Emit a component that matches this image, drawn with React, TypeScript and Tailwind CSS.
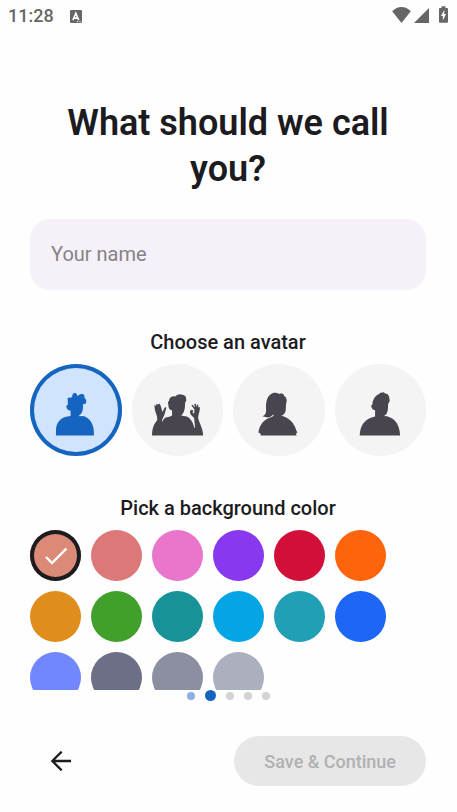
import { useState } from "react";

const avatars = [
  {
    name: "Curly hair",
    viewBox: "30 27 275 275",
    path: "M108 242 V228 C108 204 122 188 143 185 L152 183 L152 167 C147 168 141 164 140 158 C138 154 141 151 144 149 L143 129 L157 127 C155 119 162 111 169 116 L174 124 C178 115 190 115 193 121 L194 129 C199 132 200 139 198 146 L189 149 C190 163 188 177 178 181 L178 184 L190 183 C208 188 222 206 222 232 V242 Z",
  },
  {
    name: "Hands up",
    viewBox: "21 28 274 274",
    path: "M81 242 C81 220 87 207 96 197 C99 186 90 172 89 162 L88 150 L93 154 L94 147 L99 149 L103 146 L107 153 L110 164 L112 172 L120 157 L124 159 L119 177 C116 187 112 190 111 198 L113 201 C115 190 122 187 133 186 L141 182 L141 167 C133 165 129 158 130 149 C127 145 129 141 132 139 C132 129 140 123 151 125 C156 118 168 117 173 121 C181 121 185 129 183 139 L180 144 C180 162 178 174 168 182 L185 185 C196 189 203 202 208 219 L210 219 L207 190 L200 183 C193 175 193 167 200 165 L205 168 L202 173 L207 177 L208 164 L199 152 L202 150 L210 158 L207 148 L211 147 L216 157 L216 149 L219 149 L220 158 L224 157 C226 168 219 178 219 189 C221 202 234 222 234 242 Z",
  },
  {
    name: "Long hair",
    viewBox: "26 28 274 274",
    path: "M102 233 C106 210 118 193 142 187 L148 183 L146 179 C141 186 132 190 123 187 L112 184 C121 184 126 176 125 164 C124 144 127 126 140 118 C149 111 160 115 165 118 C174 114 179 119 179 124 C188 128 188 140 185 147 L184 166 C183 174 179 181 170 183 C194 188 210 205 216 228 L219 233 L215 235 L216 242 H109 L108 236 Z",
  },
  {
    name: "Short hair",
    viewBox: "24 28 274 274",
    path: "M98 242 C99 210 115 191 144 185 L144 166 C139 167 135 163 133 157 C132 153 133 151 136 149 C137 133 145 123 157 117 L161 113 L166 114 L169 112 L174 116 L181 118 C187 122 187 133 188 139 L183 148 C183 164 182 181 169 184 C199 184 218 207 219 242 Z",
  },
];

const colors = [
  { name: "Rosewater", className: "bg-[#dc8a78]" },
  { name: "Flamingo", className: "bg-[#dd7878]" },
  { name: "Pink", className: "bg-[#ea76cb]" },
  { name: "Mauve", className: "bg-[#8839ef]" },
  { name: "Red", className: "bg-[#d20f39]" },
  { name: "Peach", className: "bg-[#fe640b]" },
  { name: "Yellow", className: "bg-[#df8e1d]" },
  { name: "Green", className: "bg-[#40a02b]" },
  { name: "Teal", className: "bg-[#179299]" },
  { name: "Sky", className: "bg-[#04a5e5]" },
  { name: "Sapphire", className: "bg-[#209fb5]" },
  { name: "Blue", className: "bg-[#1e66f5]" },
  { name: "Lavender", className: "bg-[#7287fd]" },
  { name: "Slate", className: "bg-[#6c6f85]" },
  { name: "Gray", className: "bg-[#8c8fa1]" },
  { name: "Silver", className: "bg-[#acb0be]" },
];

function StatusBar() {
  return (
    <div className="flex h-8 shrink-0 items-center justify-between pr-[9px] pl-2 text-[#666666]">
      <div className="flex items-center gap-4">
        <span className="text-[18px] leading-8 font-medium">11:28</span>
        <svg viewBox="0 0 37 40" className="h-[13px] w-3" aria-hidden="true">
          <rect width="37" height="40" rx="4" fill="currentColor" />
          <path d="M9 31 L18 10 L27 31 M12 25 H24" fill="none" stroke="#fefefe" strokeWidth="5" />
          <path d="M21 36 H25 M29 36 H33" stroke="#fefefe" strokeWidth="3" />
        </svg>
      </div>
      <div className="flex items-end pb-[3px]">
        <svg viewBox="0 0 56 48" className="h-4 w-[19px]" aria-hidden="true">
          <path d="M0 13 C16 -4 40 -4 56 13 L28 48 Z" fill="currentColor" />
        </svg>
        <svg viewBox="0 0 45 45" className="ml-[3px] size-[15px]" aria-hidden="true">
          <path d="M45 0 V45 H0 Z" fill="currentColor" />
        </svg>
        <svg viewBox="0 0 28 51" className="ml-[10px] h-[17px] w-[9px]" aria-hidden="true">
          <path d="M8 0 H20 V5 H25 Q28 5 28 8 V48 Q28 51 25 51 H3 Q0 51 0 48 V8 Q0 5 3 5 H8 Z" fill="currentColor" />
          <path d="M17 11 L6 30 H12 V44 L22 24 H16 Z" fill="#fefefe" />
        </svg>
      </div>
    </div>
  );
}

export default function App() {
  const [name, setName] = useState("");
  const [avatar, setAvatar] = useState(0);
  const [color, setColor] = useState(0);

  return (
    <div className="flex h-screen flex-col bg-[#fefefe] font-['Roboto',sans-serif] text-[#1c1b1f]">
      <StatusBar />

      <main className="min-h-0 flex-1 overflow-y-auto pt-[68px] pr-[31px] pl-[30px] [scrollbar-width:none]">
        <h1 className="text-center text-[36px] leading-[46px] font-semibold">
          <label htmlFor="name">What should we call you?</label>
        </h1>
        <input
          id="name"
          type="text"
          placeholder="Your name"
          value={name}
          onChange={(e) => setName(e.target.value)}
          className="mt-[27px] block h-[71px] w-full rounded-[20px] bg-[#f6f1f9] px-[21px] pb-0.5 text-[20px] outline-none placeholder:text-[#858387]"
        />

        {/* Avatars */}
        <section className="mt-[38px]">
          <h2 className="text-center text-[20px] leading-7 font-medium">Choose an avatar</h2>
          <div className="mt-2 grid grid-cols-4 gap-[10px]">
            {avatars.map((item, i) => (
              <button
                key={item.name}
                type="button"
                aria-label={item.name}
                aria-pressed={avatar === i}
                onClick={() => setAvatar(i)}
                className={
                  avatar === i
                    ? "aspect-square rounded-full bg-[#d0e4ff] text-[#1565c0] inset-ring-4 inset-ring-[#1565c0]"
                    : "aspect-square rounded-full bg-[#f4f4f4] text-[#49454f]"
                }
              >
                <svg viewBox={item.viewBox} className="size-full" aria-hidden="true">
                  <path d={item.path} fill="currentColor" />
                </svg>
              </button>
            ))}
          </div>
        </section>

        {/* Background colors */}
        <section className="mt-[38px]">
          <h2 className="text-center text-[20px] leading-7 font-medium">Pick a background color</h2>
          <div className="mt-2 flex flex-wrap gap-[10px]">
            {colors.map((item, i) => (
              <button
                key={item.name}
                type="button"
                aria-label={item.name}
                aria-pressed={color === i}
                onClick={() => setColor(i)}
                className={`size-[51px] rounded-full ${item.className} ${
                  color === i ? "inset-ring-4 inset-ring-[#1c1b1f]" : ""
                }`}
              >
                {color === i && (
                  <svg viewBox="0 0 153 153" className="size-full" aria-hidden="true">
                    <path d="M48 81 L66 99 L109 56" fill="none" stroke="white" strokeWidth="7" />
                  </svg>
                )}
              </button>
            ))}
          </div>
        </section>
      </main>

      {/* Step dots */}
      <div className="flex shrink-0 items-center justify-center gap-[10px]">
        <span className="size-2 rounded-full bg-[#8aafe0]" />
        <span className="size-[11px] rounded-full bg-[#1565c0]" />
        <span className="size-2 rounded-full bg-[#d3d3d3]" />
        <span className="size-2 rounded-full bg-[#d3d3d3]" />
        <span className="size-2 rounded-full bg-[#d3d3d3]" />
      </div>

      <footer className="flex shrink-0 items-center justify-between pt-[35px] pr-[31px] pb-[26px] pl-[30px]">
        <button type="button" aria-label="Back" className="-my-2 flex size-[61px] items-center justify-center">
          <svg viewBox="0 0 60 60" className="size-5" aria-hidden="true">
            <path d="M60 30 H4 M32 2 L4 30 L32 58" fill="none" stroke="currentColor" strokeWidth="7" />
          </svg>
        </button>
        <button
          type="button"
          disabled={name.trim() === ""}
          className="h-[50px] rounded-full bg-[#1565c0] px-[30px] text-[18px] font-medium text-white disabled:bg-[#e7e7e7] disabled:text-[#b1b0b2]"
        >
          Save &amp; Continue
        </button>
      </footer>
    </div>
  );
}
